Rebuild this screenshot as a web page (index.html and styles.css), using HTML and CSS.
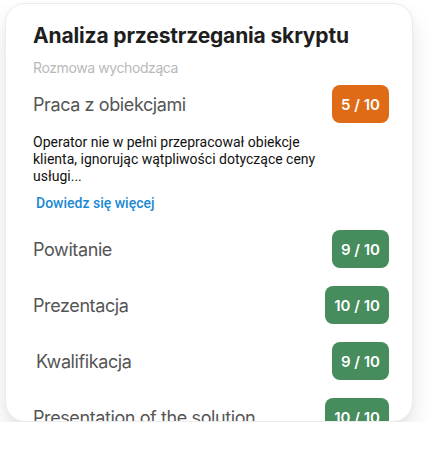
FILE: index.html
```html
<!DOCTYPE html>
<html lang="pl">
<head>
<meta charset="utf-8">
<link rel="stylesheet" href="styles.css">
</head>
<body>
<div class="stage">
  <div class="card">
    <h1 class="title">Analiza przestrzegania skryptu</h1>
    <p class="subtitle">Rozmowa wychodząca</p>
    <div class="item">
      <div class="row">
        <span class="label">Praca z obiekcjami</span>
        <span class="badge badge-orange">5 / 10</span>
      </div>
      <p class="desc">Operator nie w pełni przepracował obiekcje klienta, ignorując wątpliwości dotyczące ceny usługi...</p>
      <a class="more" href="#">Dowiedz się więcej</a>
    </div>
    <div class="row">
      <span class="label">Powitanie</span>
      <span class="badge badge-green">9 / 10</span>
    </div>
    <div class="row">
      <span class="label">Prezentacja</span>
      <span class="badge badge-green">10 / 10</span>
    </div>
    <div class="row">
      <span class="label label-indent">Kwalifikacja</span>
      <span class="badge badge-green">9 / 10</span>
    </div>
    <div class="row">
      <span class="label">Presentation of the solution</span>
      <span class="badge badge-green">10 / 10</span>
    </div>
  </div>
</div>
</body>
</html>
```

FILE: styles.css
```css
* { box-sizing: border-box; }
html, body { margin: 0; padding: 0; background: #ffffff; }
body { font-family: Inter, "Noto Sans", sans-serif; }

.stage {
  padding: 3px 0 0 5px;
}

.card {
  width: 408px;
  height: 419px;
  overflow: hidden;
  background: #ffffff;
  border-radius: 20px;
  border: 1px solid #ebebeb;
  box-shadow: 0 14px 26px rgba(0, 0, 0, 0.1), 0 2px 6px rgba(0, 0, 0, 0.03);
  padding: 18px 23px 0 27px;
  display: flex;
  flex-direction: column;
}

.title {
  margin: 0;
  font-size: 21px;
  line-height: 28px;
  font-weight: 700;
  color: #1e1e1e;
  letter-spacing: -0.15px;
}

.subtitle {
  margin: 9px 0 0;
  font-size: 14px;
  line-height: 18px;
  color: #b9b9b9;
  letter-spacing: -0.4px;
}

.item {
  margin-top: 8px;
  display: flex;
  flex-direction: column;
}

.row {
  display: flex;
  align-items: center;
  justify-content: space-between;
  flex-shrink: 0;
  height: 38px;
  margin-bottom: 18px;
}

.item .row { margin-bottom: 0; }

.label {
  font-size: 18px;
  color: #555555;
  letter-spacing: -0.4px;
}

.label-indent { padding-left: 3px; }

.badge {
  height: 38px;
  padding: 0 9px;
  border-radius: 8px;
  color: #ffffff;
  font-size: 15px;
  font-weight: 600;
  display: flex;
  align-items: center;
  justify-content: center;
}

.badge-orange { background: #df6b16; }
.badge-green { background: #468c5d; }

.desc {
  margin: 11px 0 0;
  font-family: Roboto, "Liberation Sans", sans-serif;
  font-size: 14px;
  line-height: 17px;
  color: #111111;
  padding-right: 60px;
}

.more {
  margin: 9px 0 18px 3px;
  font-family: Roboto, "Liberation Sans", sans-serif;
  font-size: 14px;
  line-height: 18px;
  font-weight: 500;
  color: #1b89d3;
  text-decoration: none;
}
```
